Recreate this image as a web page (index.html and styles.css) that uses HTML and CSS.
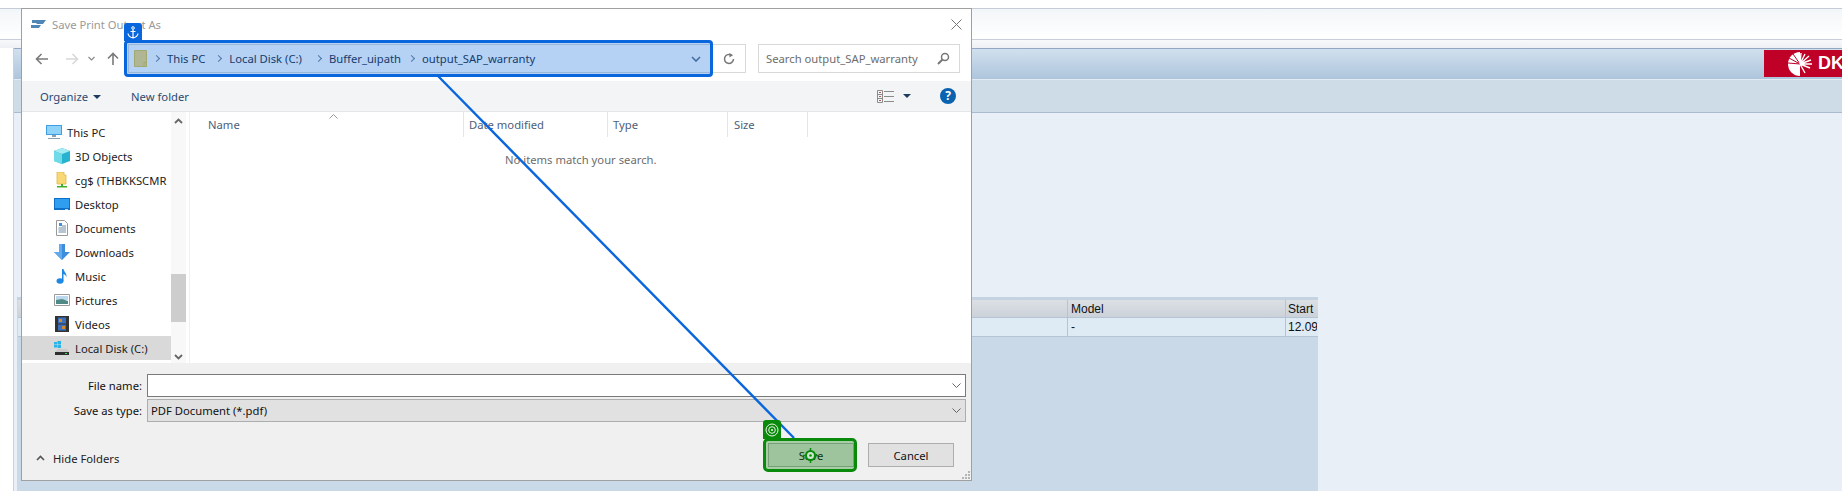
FILE: index.html
```html
<!DOCTYPE html>
<html>
<head>
    <title>Save Print Output As</title>
    <link rel="stylesheet" href="styles.css">
</head>
<body>
    <!-- SAP window behind the dialog -->
    <div class="top-white"></div>
    <div class="top-band"></div>
    <div class="top-strip"></div>
    <div class="sap">
        <div class="sap-title">
            <div class="brand">
                <svg width="26" height="24" viewBox="0 0 26 24">
                    <path d="M14 0A12 12 0 0 0 14 24Z" fill="#fff"/>
                    <path d="M14 12L7 2M14 12L3 6M14 12L2 11" stroke="#bf0027" stroke-width="1" fill="none"/>
                    <path d="M14 12L15 1M14 12L19 2M14 12L23 4M14 12L25 8M14 12L26 12M14 12L24 16M14 12L19 21" stroke="#fff" stroke-width="1.400" fill="none"/>
                </svg>
                <span class="brand-name">DK</span>
            </div>
        </div>
        <div class="sap-tools"></div>
        <div class="sap-main">
            <div class="table">
                <div class="table-row table-head">
                    <div class="cell cell-wide"></div>
                    <div class="cell cell-model">Model</div>
                    <div class="cell cell-start">Start</div>
                </div>
                <div class="table-row table-data">
                    <div class="cell cell-wide"></div>
                    <div class="cell cell-model">-</div>
                    <div class="cell cell-start">12.09</div>
                </div>
            </div>
        </div>
    </div>

    <!-- file dialog -->
    <div class="dialog">
        <div class="title-bar">
            <svg width="15" height="8" viewBox="0 0 15 8"><path d="M1 0H15L12 4H5L6 3H1ZM0 5H10L8 8H0Z" fill="#4f86b5"/></svg>
            <span class="title-text">Save Print Output As</span>
            <svg class="close" width="11" height="11" viewBox="0 0 11 11"><path d="M.5.5L10.5 10.5M10.5.5L.5 10.5" stroke="#777" fill="none"/></svg>
        </div>

        <div class="nav-row">
            <div class="nav-buttons">
                <svg width="14" height="12" viewBox="0 0 14 12"><path d="M13 6H2M6.500 1L1.500 6 6.500 11" stroke="#7a7a7a" stroke-width="1.600" fill="none"/></svg>
                <svg class="nav-fwd" width="14" height="12" viewBox="0 0 14 12"><path d="M1 6H12M7.500 1L12.500 6 7.500 11" stroke="#d8d8d8" stroke-width="1.600" fill="none"/></svg>
                <svg class="nav-down" width="7" height="5" viewBox="0 0 7 5"><path d="M.5 1L3.500 4 6.500 1" stroke="#8a8a8a" stroke-width="1.200" fill="none"/></svg>
                <svg class="nav-up" width="12" height="13" viewBox="0 0 12 13"><path d="M6 13V2M1 6.500L6 1.500 11 6.500" stroke="#7a7a7a" stroke-width="1.600" fill="none"/></svg>
            </div>
            <div class="address">
                <svg class="folder" width="13" height="17" viewBox="0 0 13 17"><path d="M.5.500H12.500V16.500H.5Z" fill="#f8d775" stroke="#e4c446"/><path d="M10 12.500H12.500V16.500H10Z" fill="none" stroke="#e4c446"/></svg>
                <span class="crumb-sep"></span><span class="crumb">This PC</span>
                <span class="crumb-sep"></span><span class="crumb crumb-disk">Local Disk (C:)</span>
                <span class="crumb-sep"></span><span class="crumb crumb-buffer">Buffer_uipath</span>
                <span class="crumb-sep"></span><span class="crumb">output_SAP_warranty</span>
                <svg class="address-drop" width="10" height="6" viewBox="0 0 10 6"><path d="M1 1L5 5 9 1" stroke="#5c7088" stroke-width="1.600" fill="none"/></svg>
            </div>
            <div class="refresh">
                <svg width="12" height="12" viewBox="0 0 12 12"><path d="M8.500 2.200A4.500 4.500 0 1 0 10.500 6" stroke="#777" stroke-width="1.500" fill="none"/><path d="M6.500 0L10 2.300 6.500 4.500Z" fill="#777"/></svg>
            </div>
            <div class="search">
                <span class="search-text">Search output_SAP_warranty</span>
                <svg width="13" height="13" viewBox="0 0 13 13"><circle cx="8" cy="5" r="3.500" stroke="#777" stroke-width="1.500" fill="none"/><path d="M5.500 7.500L1 12" stroke="#777" stroke-width="2" fill="none"/></svg>
            </div>
        </div>

        <div class="toolbar">
            <span class="tool">Organize<i class="caret"></i></span>
            <span class="tool tool-new">New folder</span>
            <div class="tool-right">
                <svg width="17" height="13" viewBox="0 0 17 13"><path d="M.5.5H5.500V12.500H.5ZM.5 4.500H5.500M.5 8.500H5.500M7 1.500H17M7 6.500H17M7 11.500H17" stroke="#8b8b8b" fill="none"/><path d="M2 2H4V3H2ZM2 6H4V7H2ZM2 10H4V11H2Z" fill="#b05a5a"/></svg>
                <i class="caret caret-view"></i>
                <span class="help">?</span>
            </div>
        </div>

        <div class="browser">
            <div class="tree">
                <div class="tree-item tree-root">
                    <svg width="16" height="16" viewBox="0 0 16 16"><path d="M0 1H16V11H0Z" fill="#3f9fe6"/><path d="M1 2H15V10H1Z" fill="#8fd4f8"/><path d="M6 11H10V13H6ZM2 14H14V15H2Z" fill="#8aa0b0"/></svg>
                    This PC
                </div>
                <div class="tree-item">
                    <svg width="16" height="16" viewBox="0 0 16 16"><path d="M8 0L16 3V13L8 16 0 13V3Z" fill="#27b3d0"/><path d="M0 3L8 6 16 3 8 0Z" fill="#a5ecf2"/><path d="M0 3L8 6V16L0 13Z" fill="#6fdbe8"/></svg>
                    3D Objects
                </div>
                <div class="tree-item">
                    <svg width="16" height="16" viewBox="0 0 16 16"><path d="M3 0H10V3H12V12H3Z" fill="#f8d775" stroke="#e3b94a" stroke-width=".8"/><path d="M7 12H9V14H13V15.500H3V14H7Z" fill="#3fae2a"/></svg>
                    cg$ (THBKKSCMR
                </div>
                <div class="tree-item">
                    <svg width="16" height="16" viewBox="0 0 16 16"><path d="M0 2H16V14H0Z" fill="#0f6fc6"/><path d="M1 3H15V12H1Z" fill="#2f9df0"/><path d="M11 13H14V13.800H11Z" fill="#d8ecfb"/></svg>
                    Desktop
                </div>
                <div class="tree-item">
                    <svg width="16" height="16" viewBox="0 0 16 16"><path d="M2.500.5H10.500L13.500 3.500V15.500H2.500Z" fill="#fff" stroke="#9a9a9a"/><path d="M5 3H8V6H5Z" fill="#3f8fe0"/><path d="M8 6H12M4.500 8H12M4.500 10H12M4.500 12H12" stroke="#6f8aa5"/></svg>
                    Documents
                </div>
                <div class="tree-item">
                    <svg width="16" height="16" viewBox="0 0 16 16"><path d="M5 0H11V8H16L8 16 0 8H5Z" fill="#3d8ddd"/><path d="M5 0H8V16L0 8H5Z" fill="#62aaee"/></svg>
                    Downloads
                </div>
                <div class="tree-item">
                    <svg width="16" height="16" viewBox="0 0 16 16"><ellipse cx="6" cy="13" rx="3.500" ry="2.700" fill="#1e88e5"/><path d="M8 1H9.500C10 4 13 5 12.500 9.500 12 7.500 11 6.500 9.500 6V13H8Z" fill="#1e88e5"/></svg>
                    Music
                </div>
                <div class="tree-item">
                    <svg width="16" height="16" viewBox="0 0 16 16"><path d="M.5 2.500H15.500V13.500H.5Z" fill="#fff" stroke="#9a9a9a"/><path d="M2 4H14V8H2Z" fill="#bcd8ee"/><path d="M2 8L8 7 14 9V12H2Z" fill="#4f8a86"/></svg>
                    Pictures
                </div>
                <div class="tree-item">
                    <svg width="16" height="16" viewBox="0 0 16 16"><path d="M1 0H15V16H1Z" fill="#333"/><path d="M4 1.500H12V7.500H4Z" fill="#3b6fc0"/><path d="M4 8.500H12V14.500H4Z" fill="#3b6fc0"/><path d="M5 3H8V6H5ZM8 10H11V13H8Z" fill="#d08a30"/></svg>
                    Videos
                </div>
                <div class="tree-item tree-selected">
                    <svg width="16" height="16" viewBox="0 0 16 16"><path d="M0 2H3V4.500H0ZM3.500 1H7V4.500H3.500ZM0 5H3V7.500H0ZM3.500 5H7V8H3.500Z" fill="#28b4e8"/><path d="M1 12L4 9H13L15 12V15H1Z" fill="#c9c9c9"/><path d="M1 12H15V15H1Z" fill="#2e2e2e"/><path d="M11 13H13V14H11Z" fill="#35e04a"/></svg>
                    Local Disk (C:)
                </div>
            </div>
            <div class="tree-scroll">
                <svg width="9" height="6" viewBox="0 0 9 6"><path d="M1 5L4.500 1.500 8 5" stroke="#666" stroke-width="1.800" fill="none"/></svg>
                <div class="tree-thumb"></div>
                <svg width="9" height="6" viewBox="0 0 9 6"><path d="M1 1L4.500 4.500 8 1" stroke="#666" stroke-width="1.800" fill="none"/></svg>
            </div>
            <div class="files">
                <div class="file-head">
                    <div class="col col-name">Name
                        <svg class="sort" width="9" height="5" viewBox="0 0 9 5"><path d="M.5 4.500L4.500 .5 8.500 4.500" stroke="#9a9a9a" fill="none"/></svg>
                    </div>
                    <div class="col col-date">Date modified</div>
                    <div class="col col-type">Type</div>
                    <div class="col col-size">Size</div>
                </div>
                <div class="empty">No items match your search.</div>
            </div>
        </div>

        <div class="footer">
            <div class="form">
                <label class="form-label">File name:</label>
                <div class="combo combo-name">
                    <svg width="9" height="5" viewBox="0 0 9 5"><path d="M.5 .5L4.500 4.500 8.500 .5" stroke="#666" fill="none"/></svg>
                </div>
                <label class="form-label">Save as type:</label>
                <div class="combo combo-type">
                    <span>PDF Document (*.pdf)</span>
                    <svg width="9" height="5" viewBox="0 0 9 5"><path d="M.5 .5L4.500 4.500 8.500 .5" stroke="#666" fill="none"/></svg>
                </div>
            </div>
            <div class="actions">
                <span class="hide-folders">
                    <svg width="9" height="6" viewBox="0 0 9 6"><path d="M1 5L4.500 1.500 8 5" stroke="#555" stroke-width="1.600" fill="none"/></svg>
                    Hide Folders
                </span>
                <button class="btn btn-save">Save</button>
                <button class="btn">Cancel</button>
            </div>
            <svg class="grip" width="10" height="10" viewBox="0 0 10 10"><path d="M7 1H9V3H7ZM4 4H6V6H4ZM7 4H9V6H7ZM1 7H3V9H1ZM4 7H6V9H4ZM7 7H9V9H7Z" fill="#b5b5b5"/></svg>
        </div>
    </div>

    <!-- selection overlay on top of the dialog -->
    <svg class="wire" width="1842" height="491"><path d="M438 76L794 438" stroke="#0a66dc" stroke-width="2.400" fill="none"/></svg>

    <div class="anchor-tab">
        <svg width="12" height="13" viewBox="0 0 12 13"><circle cx="6" cy="2" r="1.300" stroke="#fff" fill="none"/><path d="M6 3.500V12M3.500 5.500H8.500M1 7.500C1.500 10.500 4 11.500 6 12 8 11.500 10.500 10.500 11 7.500" stroke="#fff" stroke-width="1.200" fill="none"/></svg>
    </div>
    <div class="anchor-box"></div>

    <div class="target-tab">
        <svg width="14" height="14" viewBox="0 0 14 14"><circle cx="7" cy="7" r="6" stroke="#e8f5e8" fill="none"/><circle cx="7" cy="7" r="3.300" stroke="#e8f5e8" fill="none"/><circle cx="7" cy="7" r="1" fill="#e8f5e8"/></svg>
    </div>
    <div class="target-box">
        <svg width="15" height="15" viewBox="0 0 15 15"><circle cx="7.500" cy="7.500" r="4.500" stroke="#0a8a0a" stroke-width="2" fill="#cfe6cf"/><path d="M7.500 0V3M7.500 12V15M0 7.500H3M12 7.500H15" stroke="#0a8a0a" stroke-width="1.500"/><circle cx="7.500" cy="7.500" r="1.300" fill="#0a8a0a"/></svg>
    </div>
</body>
</html>
```

FILE: styles.css
```css
* {
    box-sizing: border-box;
}

html, body {
    margin: 0;
    height: 491px;
    overflow: hidden;
}

body {
    background: #fff;
    font-family: "Noto Sans", sans-serif;
    font-size: 11.25px;
    display: flex;
    flex-direction: column;
}

svg {
    flex: none;
}

/* SAP window */
.top-white {
    height: 9px;
    border-bottom: 1px solid #c4ccd6;
}

.top-band {
    height: 31px;
    background: linear-gradient(#f3f6f9, #fff);
    border-bottom: 1px solid #c8cfd8;
}

.top-strip {
    height: 8px;
    background: linear-gradient(#f7f9fb, #edf0f4);
}

.sap {
    flex: 1;
    margin-left: 13px;
    border-left: 1px solid #c5d3e0;
    display: flex;
    flex-direction: column;
    min-height: 0;
}

.sap-title {
    height: 32px;
    border-top: 1px solid #93a9c3;
    border-bottom: 1px solid #e4ecf3;
    background: linear-gradient(#d1e0ee, #adc5dc);
    display: flex;
    justify-content: flex-end;
    padding-top: 1px;
}

.brand {
    width: 78px;
    height: 27px;
    background: #bf0027;
    display: flex;
    align-items: center;
    padding-left: 22px;
    overflow: hidden;
    white-space: nowrap;
}

.brand-name {
    color: #fff;
    font-family: "Liberation Sans", sans-serif;
    font-weight: bold;
    font-size: 18px;
    margin-left: 6px;
}

.sap-tools {
    height: 33px;
    background: #cedce8;
    border-bottom: 1px solid #a9bbd0;
}

.sap-main {
    flex: 1;
    background: #e8eff6;
    padding: 184px 0 0 3px;
    display: flex;
    min-height: 0;
}

.table {
    width: 1301px;
    background: #c9d9e8;
    border-top: 3px solid #c4d3e2;
    padding-left: 1px;
    font-family: "Liberation Sans", sans-serif;
    font-size: 12px;
    color: #111;
}

.table-row {
    display: flex;
    overflow: hidden;
}

.table-head {
    height: 18px;
    background: linear-gradient(#dce0e5, #ccd2d9);
    border-bottom: 1px solid #b4c4d4;
}

.table-data {
    height: 19px;
    background: #deeaf4;
    border-bottom: 1px solid #b4c4d4;
}

.cell {
    border-right: 1px solid #b4c4d4;
    padding-left: 2px;
    line-height: 19px;
    white-space: nowrap;
    overflow: hidden;
}

.cell-wide {
    width: 1050px;
}

.cell-model {
    width: 218px;
    padding-left: 3px;
}

.cell-start {
    width: 31px;
    border-right: none;
}

/* dialog */
.dialog {
    position: absolute;
    left: 21px;
    top: 8px;
    width: 951px;
    height: 473px;
    background: #fff;
    border: 1px solid #a0a0a0;
    display: flex;
    flex-direction: column;
}

.title-bar {
    height: 30px;
    display: flex;
    align-items: center;
    padding: 0 9px 0 9px;
    flex: none;
}

.title-text {
    color: #9a9a9a;
    margin-left: 6px;
    flex: 1;
}

.nav-row {
    height: 42px;
    flex: none;
    display: flex;
    align-items: center;
    padding-bottom: 3px;
}

.nav-buttons {
    width: 106px;
    flex: none;
    padding-left: 13px;
    display: flex;
    align-items: center;
}

.nav-fwd {
    margin-left: 16px;
}

.nav-down {
    margin-left: 9px;
}

.nav-up {
    margin-left: 12px;
}

.address {
    width: 585px;
    height: 29px;
    flex: none;
    display: flex;
    align-items: center;
    padding-left: 5px;
    border: 1px solid #d9d9d9;
    color: #1b2a3a;
}

.folder {
    margin-right: 7px;
}

.crumb-sep {
    width: 5px;
    height: 5px;
    border-top: 1.5px solid #6f7f90;
    border-right: 1.5px solid #6f7f90;
    transform: rotate(45deg);
    margin-right: 8px;
}

.crumb {
    margin-right: 11px;
    white-space: nowrap;
}

.crumb-disk {
    margin-right: 14px;
}

.crumb-buffer {
    margin-right: 8px;
}

.address-drop {
    margin-left: auto;
    margin-right: 11px;
}

.refresh {
    width: 33px;
    height: 29px;
    flex: none;
    border: 1px solid #d9d9d9;
    border-left: none;
    display: flex;
    align-items: center;
    justify-content: center;
}

.search {
    width: 202px;
    height: 29px;
    flex: none;
    margin-left: 12px;
    border: 1px solid #d9d9d9;
    display: flex;
    align-items: center;
    justify-content: space-between;
    padding: 0 9px 0 7px;
    color: #6d6d6d;
    white-space: nowrap;
}

.toolbar {
    height: 31px;
    flex: none;
    background: #f3f4f6;
    border-bottom: 1px solid #e4e6e8;
    display: flex;
    align-items: center;
    padding: 0 15px 0 18px;
    color: #2b4a70;
}

.tool-new {
    margin-left: 30px;
}

.caret {
    display: inline-block;
    width: 0;
    height: 0;
    border: 4px solid transparent;
    border-top: 4px solid #1f3a5f;
    border-bottom: none;
    margin-left: 5px;
    vertical-align: 2px;
}

.tool-right {
    margin-left: auto;
    display: flex;
    align-items: center;
}

.caret-view {
    margin-left: 9px;
    margin-right: 29px;
}

.help {
    width: 16px;
    height: 16px;
    border-radius: 50%;
    background: #0b63b0;
    color: #fff;
    font-weight: bold;
    font-size: 12px;
    line-height: 16px;
    text-align: center;
}

.browser {
    height: 251px;
    flex: none;
    display: flex;
}

.tree {
    width: 149px;
    padding-top: 8px;
    color: #1b1b1b;
    flex: none;
}

.tree-item {
    height: 24px;
    display: flex;
    align-items: center;
    gap: 5px;
    padding-left: 32px;
    white-space: nowrap;
    overflow: hidden;
}

.tree-root {
    padding-left: 24px;
}

.tree-selected {
    background: #d9d9d9;
}

.tree-scroll {
    width: 15px;
    flex: none;
    background: #f8f8f8;
    display: flex;
    flex-direction: column;
    align-items: center;
    padding-top: 6px;
}

.tree-thumb {
    width: 15px;
    height: 48px;
    margin-top: 150px;
    margin-bottom: 32px;
    background: #cdcdcd;
}

.files {
    flex: 1;
    margin-left: 3px;
    border-left: 1px solid #f0f0f0;
}

.file-head {
    display: flex;
    height: 25px;
    color: #4c607a;
}

.col {
    position: relative;
    border-right: 1px solid #e5e5e5;
    padding: 5px 0 0 5px;
}

.col-name {
    width: 274px;
    padding-left: 18px;
}

.col-date {
    width: 144px;
}

.col-type {
    width: 120px;
}

.col-size {
    width: 80px;
    padding-left: 6px;
}

.sort {
    position: absolute;
    left: 139px;
    top: 2px;
}

.empty {
    margin: 15px 0 0 315px;
    color: #6d6d6d;
}

.footer {
    position: relative;
    flex: 1;
    background: #f0f0f0;
    padding: 11px 5px 0 0;
}

.form {
    display: grid;
    grid-template-columns: 120px 1fr;
    column-gap: 5px;
    row-gap: 2px;
    grid-auto-rows: 23px;
}

.form-label {
    text-align: right;
    line-height: 23px;
    color: #111;
}

.combo {
    display: flex;
    align-items: center;
    justify-content: flex-end;
    padding: 0 4px;
}

.combo-name {
    background: #fff;
    border: 1px solid #7a7a7a;
}

.combo-type {
    background: #e1e1e1;
    border: 1px solid #adadad;
    justify-content: space-between;
    padding-left: 3px;
    color: #111;
}

.actions {
    display: flex;
    align-items: center;
    margin-top: 21px;
    padding-right: 12px;
}

.hide-folders {
    display: flex;
    align-items: center;
    gap: 8px;
    margin: 6px auto 0 14px;
    color: #222;
}

.btn {
    width: 86px;
    height: 24px;
    margin-left: 14px;
    background: #e1e1e1;
    border: 1px solid #adadad;
    font-family: inherit;
    font-size: inherit;
    color: #111;
    padding: 0;
}

.grip {
    position: absolute;
    right: 0;
    bottom: 0;
}

/* overlay */
.wire {
    position: absolute;
    left: 0;
    top: 0;
}

.anchor-tab {
    position: absolute;
    left: 124px;
    top: 23px;
    width: 18px;
    height: 18px;
    background: #0a66dc;
    border-radius: 3px 3px 0 0;
    display: flex;
    align-items: center;
    justify-content: center;
}

.anchor-box {
    position: absolute;
    left: 124px;
    top: 40px;
    width: 589px;
    height: 37px;
    border: 3px solid #0a66dc;
    border-radius: 4px;
    background: rgba(10, 102, 220, 0.3);
}

.target-tab {
    position: absolute;
    left: 763px;
    top: 420px;
    width: 18px;
    height: 19px;
    background: #0a8a0a;
    border-radius: 3px 3px 0 0;
    display: flex;
    align-items: center;
    justify-content: center;
}

.target-box {
    position: absolute;
    left: 763px;
    top: 438px;
    width: 94px;
    height: 34px;
    border: 3px solid #0a8a0a;
    border-radius: 5px;
    background: rgba(0, 128, 0, 0.3);
    display: flex;
    align-items: center;
    justify-content: center;
}
```
